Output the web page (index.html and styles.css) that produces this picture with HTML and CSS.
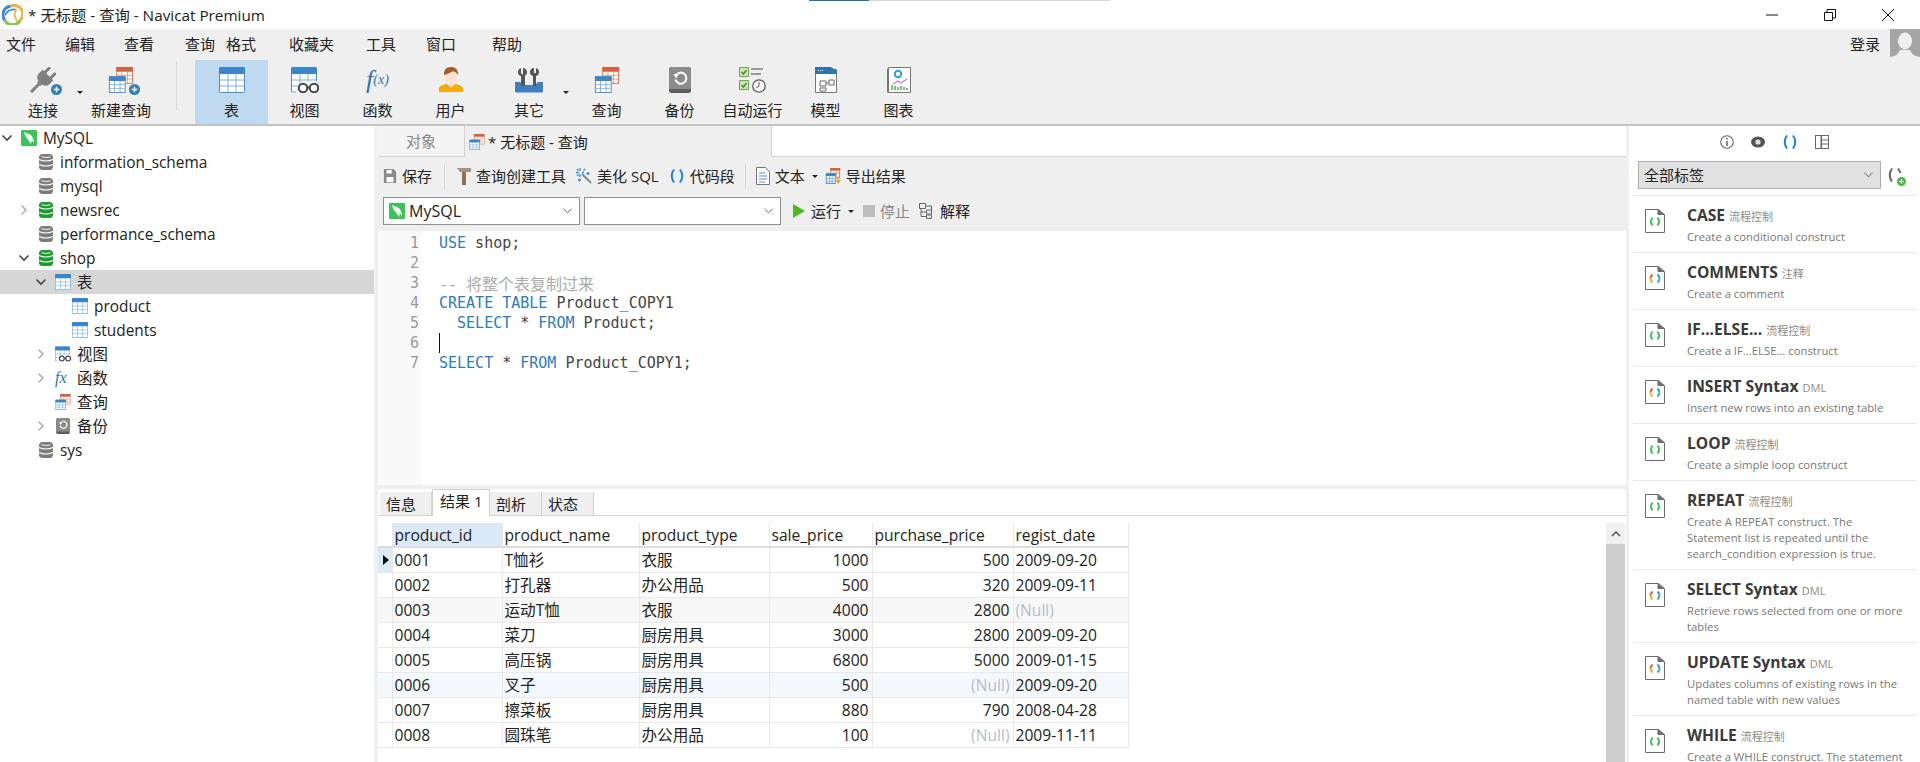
FILE: index.html
```html
<!DOCTYPE html>
<html lang="zh">
<head>
<meta charset="utf-8">
<title>Navicat Premium</title>
<link rel="stylesheet" href="styles.css">
</head>
<body>
<svg class="defs" aria-hidden="true">
  <symbol id="table" viewBox="0 0 26 26"><rect x=".5" y=".5" width="25" height="25" rx="1" fill="#fff" stroke="#4a8cc7"/><path d="M0 7V1.500Q0 0 1.500 0h23Q26 0 26 1.500V7z" fill="#3d85c6"/><path d="M9 7v18M17 7v18M1 13h24M1 19h24" stroke="#7fb0dc"/></symbol>
  <symbol id="view" viewBox="0 0 28 26"><path d="M.5 25V1.500q0-1 1-1h23q1 0 1 1V14" fill="#fff" stroke="#4a8cc7"/><path d="M0 7V1.500Q0 0 1.500 0h23Q26 0 26 1.500V7z" fill="#3d85c6"/><path d="M9 7v11M17 7v7M1 13h24M1 19h6M.5 25H5" stroke="#7fb0dc" fill="none"/><circle cx="12" cy="21" r="4.200" fill="#fff" stroke="#444" stroke-width="2"/><circle cx="23" cy="21" r="4.200" fill="#fff" stroke="#444" stroke-width="2"/><path d="M16 20.500h3" stroke="#444" stroke-width="2"/></symbol>
  <symbol id="user" viewBox="0 0 26 28"><path d="M0 27v-4q1-3 8-5h10q7 2 8 5v4z" fill="#f1ad0e"/><path d="M9 15h8v4l-4 3-4-3z" fill="#fbe3cf"/><ellipse cx="13" cy="9.500" rx="7" ry="8.500" fill="#fbe3cf"/><path d="M5.500 9Q5 0 13 0t7.500 9Q19 5 15 4.500 10 7 5.500 9" fill="#a65a2c"/></symbol>
  <symbol id="tools" viewBox="0 0 28 26"><path d="M0 15h5l3 3h12l3-3h5v9q0 1.500-1.500 1.500h-25Q0 25.500 0 24z" fill="#3f7fbf"/><path d="M6 1v5l2 2V1h1v0q3 1 3 5-1 2-2 3v10H6V9Q3 8 3 5q0-3 3-4zM18 1h1v5h2V1h0q3 1 3 4 0 3-3 4v10h-3V9q-3-1-3-4t3-4z" fill="#555"/></symbol>
  <symbol id="query" viewBox="0 0 26 28"><rect x="8.500" y=".5" width="17" height="17" fill="#fff" stroke="#d4694a"/><path d="M8 5V1q0-1 1-1h16q1 0 1 1v4z" fill="#d4613e"/><path d="M14 5v12M20 5v12M9 9h16M9 13h16" stroke="#e39a84"/><rect x=".5" y="10.500" width="17" height="17" fill="#fff" stroke="#4a8cc7"/><path d="M0 15v-4q0-1 1-1h16q1 0 1 1v4z" fill="#3d85c6"/><path d="M6 15v12M12 15v12M1 19h16M1 23h16" stroke="#7fb0dc"/></symbol>
  <symbol id="backup" viewBox="0 0 22 26"><rect width="22" height="26" rx="2.500" fill="#5f5f5f"/><path d="M0 2.500Q0 0 2.500 0h17Q22 0 22 2.500V22H0z" fill="#8c8c8c"/><path d="M7 8.500a5.500 5.500 0 1 1-.5 4" fill="none" stroke="#fff" stroke-width="2"/><path d="M4.500 7l5 .5-2.500 4z" fill="#fff"/></symbol>
  <symbol id="autorun" viewBox="0 0 28 26"><path d="M.5.500h9v9h-9zM.5 13.500h9v9h-9z" fill="#cfe3bb" stroke="#6aa84f"/><path d="M2.500 5l2 2 3-4M2.500 18l2 2 3-4" fill="none" stroke="#4d8b31" stroke-width="1.500"/><path d="M12 2h12M12 7h10" stroke="#9b9b9b" stroke-width="1.800"/><circle cx="20" cy="19" r="6.200" fill="#fff" stroke="#555" stroke-width="1.300"/><path d="M20 15v4l-3 2" fill="none" stroke="#a33"/></symbol>
  <symbol id="model" viewBox="0 0 22 26"><path d="M.5 2.500h21v23H.5z" fill="#fff" stroke="#777"/><path d="M0 7V0h16l6 4v3z" fill="#2f74ad"/><path d="M5 14h6v5H5zM14 13h5v5h-5zM5 21h6v3H5z" fill="none" stroke="#666"/><path d="M11 16h3" stroke="#666"/><path d="M3 3.500h5" stroke="#fff" stroke-dasharray="1 1"/></symbol>
  <symbol id="chart" viewBox="0 0 24 26"><path d="M1.500.5h22v25h-22z" fill="#fff" stroke="#777"/><path d="M.5 1.500v24" stroke="#777"/><circle cx="11" cy="7" r="3.200" fill="none" stroke="#2e9fd0" stroke-width="2"/><path d="M6 17l5-3 3 2 6-4" fill="none" stroke="#bb7fd2" stroke-width="1.200"/><path d="M5 23v-5M8 23v-4M11 23v-3M14 23v-4M17 23v-3M20 23v-2" stroke="#4caf50" stroke-width="1.500"/></symbol>
  <symbol id="plug" viewBox="0 0 26 26"><g transform="rotate(45 13 13)" fill="#808080"><rect x="7.500" y="-1" width="3" height="8" rx="1"/><rect x="15.500" y="-1" width="3" height="8" rx="1"/><path d="M5.500 6h15v5q0 5-5 6v2h-5v-2q-5-1-5-6z"/><rect x="11.500" y="18" width="3" height="12"/></g></symbol>
  <symbol id="plus" viewBox="0 0 12 12"><circle cx="6" cy="6" r="6" fill="#2f7fb9"/><path d="M3 6h6M6 3v6" stroke="#fff" stroke-width="1.500"/></symbol>
  <symbol id="db" viewBox="0 0 14 16"><rect width="14" height="16" rx="3.500" fill="currentColor"/><path d="M0 5.500Q7 8.500 14 5.500M0 10.500Q7 13.500 14 10.500" fill="none" stroke="#fff" stroke-width="1.100"/><path d="M2.500 2.800Q7 4.300 11.500 2.800" fill="none" stroke="#fff" stroke-width=".9"/></symbol>
  <symbol id="mysql" viewBox="0 0 16 16"><rect width="16" height="16" rx="1" fill="#3bc45a"/><path d="M3 2l6 2.500q3.500 2 4 8.500l-2-2.500q-1 2-1 3.500Q8 11 6.500 9 4 6.500 3 2z" fill="#fff"/></symbol>
  <symbol id="down" viewBox="0 0 14 14"><path d="M2.500 4.500L7 9l4.500-4.500" fill="none" stroke="currentColor" stroke-width="1.600"/></symbol>
  <symbol id="right" viewBox="0 0 14 14"><path d="M4.500 2.500L9 7l-4.500 4.500" fill="none" stroke="currentColor" stroke-width="1.600"/></symbol>
  <symbol id="smalldown" viewBox="0 0 10 6"><path d="M.5.500L5 5 9.500.5" fill="none" stroke="#555"/></symbol>
  <symbol id="snip-g" viewBox="0 0 20 24"><path d="M.5.500h13l6 5v18H.5z" fill="#fff" stroke="#6b6b6b"/><path d="M13 .5v5h6" fill="#6b6b6b" stroke="#6b6b6b"/><path d="M7.500 8.500Q4.500 12.500 7.500 16.500M12.500 8.500Q15.500 12.500 12.500 16.500" fill="none" stroke="#44c15b" stroke-width="2"/></symbol>
  <symbol id="snip-c" viewBox="0 0 20 24"><path d="M.5.500h13l6 5v18H.5z" fill="#fff" stroke="#6b6b6b"/><path d="M13 .5v5h6" fill="#6b6b6b" stroke="#6b6b6b"/><path d="M7.500 8.500Q5.500 10.500 5.500 12.500" fill="none" stroke="#e2603a" stroke-width="2"/><path d="M5.500 12.500Q5.500 14.500 7.500 16.500" fill="none" stroke="#efb02c" stroke-width="2"/><path d="M12.500 8.500Q14.500 10.500 14.500 12.500" fill="none" stroke="#2f9ee0" stroke-width="2"/><path d="M14.500 12.500Q14.500 14.500 12.500 16.500" fill="none" stroke="#3bb4a0" stroke-width="2"/></symbol>
  <symbol id="paren" viewBox="0 0 16 16"><path d="M5 1.500Q.5 8 5 14.500M11 1.500Q15.500 8 11 14.500" fill="none" stroke="#2a7de1" stroke-width="2"/></symbol>
  <symbol id="paren-grey" viewBox="0 0 16 16"><path d="M5 1.500Q.5 8 5 14.500" fill="none" stroke="#666" stroke-width="2"/><path d="M11 1.500Q13 4 13.500 6" fill="none" stroke="#666" stroke-width="2"/></symbol>
  <symbol id="save" viewBox="0 0 14 16"><path d="M0 0h11l3 3v13H0z" fill="#8a8a8a"/><path d="M3 1h6v4H3zM3 9h8v6H3z" fill="#fff"/></symbol>
  <symbol id="hammer" viewBox="0 0 14 18"><path d="M0 1h14v4H9v13H5V5H3z" fill="#a2917d"/><path d="M5 5h4v13H5z" fill="#8b7355"/></symbol>
  <symbol id="wand" viewBox="0 0 16 16"><path d="M6 6l9 9" stroke="#888" stroke-width="2"/><path d="M4 0v3M4 6v3M0 4.500h3M6 4.500h2M9 1L7.500 2.500M1 1l1.500 1.500M1 8l1.500-1.500M12 4v3M10.500 5.500h3M2 12h3M3.500 10.500v3" stroke="#2a8fd8" stroke-width="1.300"/></symbol>
  <symbol id="doc" viewBox="0 0 14 18"><path d="M.5.500h9l4 4v13H.5z" fill="#fff" stroke="#777"/><path d="M3 6h6M3 9h8M3 12h8M3 15h6" stroke="#5a8dbb"/></symbol>
  <symbol id="export" viewBox="0 0 16 18"><rect x="5.500" y=".5" width="10" height="10" fill="#fff" stroke="#d4694a"/><path d="M5 3V0h11v3z" fill="#d4613e"/><path d="M9 3v7M12 3v7M6 6h9" stroke="#e39a84"/><rect x=".5" y="6.500" width="10" height="11" fill="#fff" stroke="#4a8cc7"/><path d="M0 9V6h11v3z" fill="#3d85c6"/><path d="M4 9v8M7 9v8M1 12h9M1 15h9" stroke="#7fb0dc"/><path d="M10 10q4 0 4 4v1M11.500 13.500l2.500 3 2-3" fill="none" stroke="#e79b2b" stroke-width="1.500"/></symbol>
  <symbol id="play" viewBox="0 0 14 18"><path d="M1 2l12 7-12 7z" fill="#4eb81e"/></symbol>
  <symbol id="explain" viewBox="0 0 16 16"><path d="M.5.500h6v5h-6zM2 5.500v8h5M2 9h5M7.500 7h5v4h-5zM7.500 12h5v3.500h-5zM6.500 3h6v4" fill="none" stroke="#666"/></symbol>
  <symbol id="info" viewBox="0 0 14 14"><circle cx="7" cy="7" r="6.300" fill="none" stroke="#666" stroke-width="1.100"/><path d="M7 6v5M7 3v1.500" stroke="#555" stroke-width="1.400"/></symbol>
  <symbol id="eye" viewBox="0 0 14 14"><ellipse cx="7" cy="7" rx="7" ry="5.500" fill="#555"/><circle cx="7" cy="7" r="2.600" fill="#ddd"/></symbol>
  <symbol id="panes" viewBox="0 0 14 14"><path d="M0 0h14v14H0z" fill="#666"/><path d="M1 1h4.500v12H1zM7 1h6v3.500H7zM7 5.500h6v3H7zM7 9.500h6V13H7z" fill="#fff"/></symbol>
  <symbol id="logo" viewBox="0 0 22 22"><path d="M3 17A9 9 0 0 0 19 17" fill="none" stroke="#8bc34a" stroke-width="3.200"/><path d="M3 17A9 9 0 0 1 9 2.300" fill="none" stroke="#3a88d8" stroke-width="3.200"/><path d="M9 2.300A9 9 0 0 1 19 17" fill="none" stroke="#f2b13e" stroke-width="3.200"/><path d="M3 12Q7 4 15 6" fill="none" stroke="#3a88d8" stroke-width="1.800"/><path d="M15 6q-4 5 1 12" fill="none" stroke="#f2b13e" stroke-width="1.800"/></symbol>
  <symbol id="avatar" viewBox="0 0 30 31"><ellipse cx="15" cy="12" rx="7" ry="8.500" fill="#efefef"/><path d="M0 31v-3q8-1 10-7h10q2 6 10 7v3z" fill="#efefef"/></symbol>
</svg>

<header class="titlebar">
  <svg class="logo"><use href="#logo"/></svg>
  <span class="title">* 无标题 - 查询 - Navicat Premium</span>
  <div class="winctl">
    <svg class="win" viewBox="0 0 14 14"><path d="M1 7h12" stroke="#111"/></svg>
    <svg class="win" viewBox="0 0 14 14"><path d="M1.500 4.500h8v8h-8zM4 4.500V1.500h8.500V10H9.500" fill="none" stroke="#111"/></svg>
    <svg class="win" viewBox="0 0 14 14"><path d="M1 1l12 12M13 1L1 13" stroke="#111"/></svg>
  </div>
  <div class="progress"><i></i></div>
</header>

<nav class="menubar">
  <div class="menus">
    <span>文件</span><span>编辑</span><span>查看</span><span>查询</span><span>格式</span><span>收藏夹</span><span>工具</span><span>窗口</span><span>帮助</span>
  </div>
  <div class="login"><span>登录</span><svg class="avatar"><use href="#avatar"/></svg></div>
</nav>

<div class="toolbar">
  <div class="tb tb-connect"><span class="tb-ic"><svg class="i26"><use href="#plug"/></svg><svg class="badge"><use href="#plus"/></svg></span><span>连接</span><i class="caret caret-out"></i></div>
  <div class="tb tb-new"><span class="tb-ic"><svg class="i26"><use href="#query"/></svg><svg class="badge"><use href="#plus"/></svg></span><span>新建查询</span></div>
  <div class="tb-sep"></div>
  <div class="tb active"><span class="tb-ic"><svg class="i26"><use href="#table"/></svg></span><span>表</span></div>
  <div class="tb"><span class="tb-ic"><svg class="i28"><use href="#view"/></svg></span><span>视图</span></div>
  <div class="tb"><span class="tb-ic fx"><span>f</span><small>(x)</small></span><span>函数</span></div>
  <div class="tb"><span class="tb-ic"><svg class="i26"><use href="#user"/></svg></span><span>用户</span></div>
  <div class="tb tb-other"><span class="tb-ic"><svg class="i28"><use href="#tools"/></svg></span><span>其它</span><i class="caret caret-out"></i></div>
  <div class="tb"><span class="tb-ic"><svg class="i26"><use href="#query"/></svg></span><span>查询</span></div>
  <div class="tb"><span class="tb-ic"><svg class="i26"><use href="#backup"/></svg></span><span>备份</span></div>
  <div class="tb"><span class="tb-ic"><svg class="i28"><use href="#autorun"/></svg></span><span>自动运行</span></div>
  <div class="tb"><span class="tb-ic"><svg class="i26"><use href="#model"/></svg></span><span>模型</span></div>
  <div class="tb"><span class="tb-ic"><svg class="i26"><use href="#chart"/></svg></span><span>图表</span></div>
</div>

<main class="workspace">
  <aside class="tree">
    <div class="row l0"><svg class="chev dark"><use href="#down"/></svg><svg class="ti"><use href="#mysql"/></svg><span>MySQL</span></div>
    <div class="row l0 nochev"><svg class="ti grey"><use href="#db"/></svg><span>information_schema</span></div>
    <div class="row l0 nochev"><svg class="ti grey"><use href="#db"/></svg><span>mysql</span></div>
    <div class="row l1"><svg class="chev"><use href="#right"/></svg><svg class="ti green"><use href="#db"/></svg><span>newsrec</span></div>
    <div class="row l0 nochev"><svg class="ti grey"><use href="#db"/></svg><span>performance_schema</span></div>
    <div class="row l1"><svg class="chev dark"><use href="#down"/></svg><svg class="ti green"><use href="#db"/></svg><span>shop</span></div>
    <div class="row l2 selected"><svg class="chev dark"><use href="#down"/></svg><svg class="ti"><use href="#table"/></svg><span>表</span></div>
    <div class="row l3"><svg class="ti"><use href="#table"/></svg><span>product</span></div>
    <div class="row l3"><svg class="ti"><use href="#table"/></svg><span>students</span></div>
    <div class="row l2"><svg class="chev"><use href="#right"/></svg><svg class="ti"><use href="#view"/></svg><span>视图</span></div>
    <div class="row l2"><svg class="chev"><use href="#right"/></svg><i class="ti fxs">fx</i><span>函数</span></div>
    <div class="row l2 nochev"><svg class="ti"><use href="#query"/></svg><span>查询</span></div>
    <div class="row l2"><svg class="chev"><use href="#right"/></svg><svg class="ti"><use href="#backup"/></svg><span>备份</span></div>
    <div class="row l0 nochev"><svg class="ti grey"><use href="#db"/></svg><span>sys</span></div>
  </aside>

  <section class="center">
    <div class="tabs">
      <div class="tab">对象</div>
      <div class="tab tab-on"><svg class="i16"><use href="#query"/></svg><span>* 无标题 - 查询</span></div>
      <div class="tabfill"></div>
    </div>
    <div class="tools">
      <span class="ti-item"><svg class="i14"><use href="#save"/></svg>保存</span>
      <i class="vsep"></i>
      <span class="ti-item"><svg class="i14 ham"><use href="#hammer"/></svg>查询创建工具</span>
      <span class="ti-item"><svg class="i16"><use href="#wand"/></svg>美化 SQL</span>
      <span class="ti-item"><svg class="i16"><use href="#paren"/></svg>代码段</span>
      <i class="vsep vsep-tight"></i>
      <span class="ti-item"><svg class="i14 ham"><use href="#doc"/></svg>文本<i class="caret caret-in"></i></span>
      <span class="ti-item export"><svg class="i16"><use href="#export"/></svg>导出结果</span>
    </div>
    <div class="conn">
      <div class="sel"><svg class="i16"><use href="#mysql"/></svg><span>MySQL</span><svg class="sel-ch"><use href="#smalldown"/></svg></div>
      <div class="sel"><span></span><svg class="sel-ch"><use href="#smalldown"/></svg></div>
      <span class="ti-item run"><svg class="i14 ham"><use href="#play"/></svg>运行<i class="caret caret-in"></i></span>
      <span class="ti-item off"><i class="stop"></i>停止</span>
      <span class="ti-item"><svg class="i16"><use href="#explain"/></svg>解释</span>
    </div>
    <div class="editor">
      <div class="gutter"><div>1</div><div>2</div><div>3</div><div>4</div><div>5</div><div>6</div><div>7</div></div>
      <div class="code">
        <div><b>USE</b> shop;</div>
        <div>&nbsp;</div>
        <div class="cm">-- <span>将整个表复制过来</span></div>
        <div><b>CREATE</b> <b>TABLE</b> Product_COPY1</div>
        <div>&nbsp;&nbsp;<b>SELECT</b> * <b>FROM</b> Product;</div>
        <div class="cursor">&nbsp;</div>
        <div><b>SELECT</b> * <b>FROM</b> Product_COPY1;</div>
      </div>
    </div>
    <div class="restabs">
      <div class="rt">信息</div>
      <div class="rt rt-on">结果 1</div>
      <div class="rt">剖析</div>
      <div class="rt">状态</div>
    </div>
    <div class="resbody">
      <div class="grid-wrap">
        <table class="grid">
          <colgroup><col class="c0"><col class="c1"><col class="c2"><col class="c3"><col class="c4"><col class="c5"><col class="c6"></colgroup>
          <thead><tr><th class="ind"></th><th class="hot">product_id</th><th>product_name</th><th>product_type</th><th>sale_price</th><th>purchase_price</th><th>regist_date</th></tr></thead>
          <tbody>
            <tr><td class="ind ind-on"><i></i></td><td>0001</td><td>T恤衫</td><td>衣服</td><td class="n">1000</td><td class="n">500</td><td>2009-09-20</td></tr>
            <tr><td class="ind"></td><td>0002</td><td>打孔器</td><td>办公用品</td><td class="n">500</td><td class="n">320</td><td>2009-09-11</td></tr>
            <tr class="alt"><td class="ind"></td><td>0003</td><td>运动T恤</td><td>衣服</td><td class="n">4000</td><td class="n">2800</td><td class="null">(Null)</td></tr>
            <tr><td class="ind"></td><td>0004</td><td>菜刀</td><td>厨房用具</td><td class="n">3000</td><td class="n">2800</td><td>2009-09-20</td></tr>
            <tr><td class="ind"></td><td>0005</td><td>高压锅</td><td>厨房用具</td><td class="n">6800</td><td class="n">5000</td><td>2009-01-15</td></tr>
            <tr class="hl"><td class="ind"></td><td>0006</td><td>叉子</td><td>厨房用具</td><td class="n">500</td><td class="n null">(Null)</td><td>2009-09-20</td></tr>
            <tr><td class="ind"></td><td>0007</td><td>擦菜板</td><td>厨房用具</td><td class="n">880</td><td class="n">790</td><td>2008-04-28</td></tr>
            <tr><td class="ind"></td><td>0008</td><td>圆珠笔</td><td>办公用品</td><td class="n">100</td><td class="n null">(Null)</td><td>2009-11-11</td></tr>
          </tbody>
        </table>
      </div>
      <div class="vscroll"><div class="arrow"><svg viewBox="0 0 10 6"><path d="M1 5l4-4 4 4" fill="none" stroke="#555" stroke-width="1.500"/></svg></div><div class="thumb"></div></div>
    </div>
  </section>

  <aside class="side">
    <div class="side-ic">
      <svg class="i14"><use href="#info"/></svg>
      <svg class="i14"><use href="#eye"/></svg>
      <svg class="i16"><use href="#paren"/></svg>
      <svg class="i14"><use href="#panes"/></svg>
    </div>
    <div class="side-sel">
      <div class="tagsel"><span>全部标签</span><svg class="sel-ch"><use href="#smalldown"/></svg></div>
      <span class="addsnip"><svg class="i16"><use href="#paren-grey"/></svg><svg class="addb" viewBox="0 0 10 10"><circle cx="5" cy="5" r="5" fill="#4cb648"/><path d="M2.500 5h5M5 2.500v5" stroke="#fff" stroke-width="1.300"/></svg></span>
    </div>
    <div class="snips">
      <article class="snip"><svg class="snip-ic"><use href="#snip-g"/></svg><div><h4>CASE <small>流程控制</small></h4><p>Create a conditional construct</p></div></article>
      <article class="snip"><svg class="snip-ic"><use href="#snip-c"/></svg><div><h4>COMMENTS <small>注释</small></h4><p>Create a comment</p></div></article>
      <article class="snip"><svg class="snip-ic"><use href="#snip-g"/></svg><div><h4>IF...ELSE... <small>流程控制</small></h4><p>Create a IF...ELSE... construct</p></div></article>
      <article class="snip"><svg class="snip-ic"><use href="#snip-c"/></svg><div><h4>INSERT Syntax <small>DML</small></h4><p>Insert new rows into an existing table</p></div></article>
      <article class="snip"><svg class="snip-ic"><use href="#snip-g"/></svg><div><h4>LOOP <small>流程控制</small></h4><p>Create a simple loop construct</p></div></article>
      <article class="snip"><svg class="snip-ic"><use href="#snip-g"/></svg><div><h4>REPEAT <small>流程控制</small></h4><p>Create A REPEAT construct. The Statement list is repeated until the search_condition expression is true.</p></div></article>
      <article class="snip"><svg class="snip-ic"><use href="#snip-c"/></svg><div><h4>SELECT Syntax <small>DML</small></h4><p>Retrieve rows selected from one or more tables</p></div></article>
      <article class="snip"><svg class="snip-ic"><use href="#snip-c"/></svg><div><h4>UPDATE Syntax <small>DML</small></h4><p>Updates columns of existing rows in the named table with new values</p></div></article>
      <article class="snip"><svg class="snip-ic"><use href="#snip-g"/></svg><div><h4>WHILE <small>流程控制</small></h4><p>Create a WHILE construct. The statement list within a WHILE statement is repeated</p></div></article>
    </div>
  </aside>
</main>
</body>
</html>
```

FILE: styles.css
```css
* { box-sizing: border-box; }
html, body { margin: 0; height: 762px; overflow: hidden; }
body {
  display: flex; flex-direction: column; width: 1920px;
  font: 15px/20px "Open Sans", "Noto Sans CJK SC", sans-serif;
  color: #222; background: #fff;
}
svg { display: block; flex: none; overflow: visible; }
.defs { position: absolute; width: 0; height: 0; }
.i14 { width: 14px; height: 14px; }
.i16 { width: 16px; height: 16px; }
.i26 { width: 26px; height: 26px; }
.i28 { width: 28px; height: 26px; }
.ham { width: 14px; height: 18px; }

/* title bar */
.titlebar { position: relative; flex: none; height: 29px; display: flex; align-items: center; padding-left: 2px; }
.logo { width: 21px; height: 21px; }
.title { margin-left: 5px; color: #222; font-size: 15.3px; }
.winctl { margin-left: auto; display: flex; gap: 44px; padding-right: 25px; }
.win { width: 14px; height: 14px; }
.progress { position: absolute; left: 809px; top: 0; width: 301px; height: 1px; background: #d8d8d8; }
.progress i { display: block; width: 60px; height: 1px; background: #1e6fb5; }

/* menu */
.menubar { flex: none; height: 31px; background: #efefef; display: flex; justify-content: space-between; align-items: flex-start; }
.menus { display: grid; grid-template-columns: 59px 59px 61px 41px 63px 77px 60px 66px auto; padding: 5px 0 0 6px; }
.login { display: flex; gap: 10px; align-items: flex-start; }
.login span { margin-top: 5px; }
.avatar { width: 30px; height: 31px; background: #a5a5a5; }

/* toolbar */
.toolbar { flex: none; height: 66px; background: #efefef; border-bottom: 2px solid #c4c4c4; display: flex; padding-left: 6px; }
.tb { position: relative; width: 73px; height: 64px; display: flex; flex-direction: column; align-items: center; padding-top: 6px; }
.tb-ic { position: relative; display: flex; justify-content: center; align-items: center; height: 28px; margin-bottom: 6px; }
.tb.active { background: #bfd9f0; }
.tb-connect { width: 74px; }
.tb-new { width: 82px; }
.tb-sep { width: 1px; height: 50px; margin: 1px 18px 0 14px; background: #d9d9d9; }
.tb-other { width: 74px; margin: 0 4px 0 5px; }
.badge { position: absolute; right: -6px; bottom: -1px; width: 11px; height: 11px; }
.caret { display: block; border: 3px solid transparent; border-top: 3px solid #222; border-bottom: 0; }
.caret-out { position: absolute; right: -3px; top: 31px; }
.fx { font: italic 26px/28px "Liberation Serif", serif; color: #2f74ad; }
.fx small { font-size: 14px; }

/* workspace */
.workspace { flex: 1; min-height: 0; display: flex; }
.tree { flex: none; width: 374px; margin-right: 4px; box-shadow: 4px 0 0 #f0f0f0; font-size: 15.4px; }
.row { height: 24px; display: flex; align-items: center; color: #222; }
.row span { margin-top: 2px; }
.l1 { padding-left: 17px; }
.l2 { padding-left: 34px; }
.l3 { padding-left: 72px; }
.l0.nochev { padding-left: 38px; }
.l2.nochev { padding-left: 55px; }
.chev { width: 14px; height: 14px; margin-right: 7px; color: #b0b0b0; }
.chev.dark { color: #444; }
.ti { width: 16px; height: 16px; margin-right: 6px; }
.grey { color: #7d7d7d; }
.green { color: #1c9c2c; }
.fxs { font: italic 16px/16px "Liberation Serif", serif; color: #2f74ad; }
.selected { background: #d6d6d6; }

/* center */
.center { flex: none; width: 1249px; display: flex; flex-direction: column; min-height: 0; }
.tabs { flex: none; height: 31px; display: flex; background: #efefef; }
.tab { width: 87px; display: flex; align-items: center; justify-content: center; gap: 3px; color: #888; background: #f4f4f4; border: 1px solid #d2d2d2; border-width: 0 1px 1px 0; }
.tab-on { width: 306px; justify-content: flex-start; padding-left: 4px; background: #efefef; color: #222; border-width: 0; }
.tabfill { flex: 1; background: #fff; border-bottom: 1px solid #d2d2d2; border-left: 1px solid #d2d2d2; }
.tools, .conn { flex: none; display: flex; align-items: center; background: #efefef; padding-left: 5px; }
.tools { height: 38px; gap: 10px; }
.conn { height: 36px; padding-bottom: 6px; padding-top: 2px; gap: 4px; }
.ti-item { display: flex; align-items: center; gap: 5px; white-space: nowrap; }
.vsep { width: 1px; height: 25px; background: #d9d9d9; margin: 0 2px; }
.vsep-tight { margin: 0; }
.export { margin-left: -3px; }
.sel { width: 197px; height: 28px; display: flex; align-items: center; gap: 4px; padding-left: 5px; background: #fff; border: 1px solid #8f8f8f; font-size: 16px; }
.sel-ch { width: 9px; height: 6px; margin-left: auto; margin-right: 7px; }
.run { margin-left: 7px; }
.off { color: #888; }
.conn .ti-item + .ti-item { margin-left: 5px; }
.caret-in { margin-left: 2px; }
.stop { width: 12px; height: 12px; background: #bdbdbd; }

.editor { flex: none; height: 254px; display: flex; background: #fff; font: 15px/20px "DejaVu Sans Mono", monospace; color: #444; padding-top: 2px; }
.gutter { width: 43px; margin-top: -2px; padding: 2px 2px 0 0; text-align: right; background: #f9f9f9; color: #999; margin-right: 18px; }
.code { flex: 1; position: relative; }
.code b { font-weight: 400; color: #2c7bbd; }
.cm { color: #aaa; height: 20px; }
.cm span { font: 16px/20px "Noto Sans CJK SC", sans-serif; }
.cursor { box-shadow: inset 1px 0 0 #111; width: 10px; }

.restabs { flex: none; height: 31px; display: flex; align-items: flex-end; padding-left: 2px; background: #fff; border-top: 4px solid #efefef; border-bottom: 1px solid #d2d2d2; }
.rt { width: 52px; height: 24px; margin-bottom: -1px; padding-left: 6px; background: #efefef; border: 1px solid #d2d2d2; border-width: 0 1px 1px 0; line-height: 24px; }
.rt-on { width: 58px; height: 27px; padding-left: 7px; background: #fff; border-width: 1px 1px 0 1px; line-height: 22px; }
.resbody { flex: 1; min-height: 0; display: flex; padding-top: 7px; overflow: hidden; }
.grid-wrap { flex: 1; }
.grid { border-collapse: collapse; table-layout: fixed; width: 750px; line-height: 20px; font-size: 15.6px; }
.c0 { width: 14px; } .c1 { width: 110px; } .c2 { width: 137px; } .c3 { width: 130px; } .c4 { width: 103px; } .c5 { width: 141px; } .c6 { width: 115px; }
.grid th, .grid td { height: 25px; padding: 0 3px 0 2px; font-weight: 400; text-align: left; white-space: nowrap; border: 1px solid #e8e8e8; border-width: 0 1px 1px 0; overflow: hidden; }
.grid th { height: 24px; border-bottom: 2px solid #dcdcdc; }
.grid .ind { padding: 0; position: relative; }
.grid .hot { background: #d9e9f7; }
.grid .ind-on { background: #dceaf7; }
.ind-on i { display: block; margin-left: 5px; width: 0; height: 0; border: 5px solid transparent; border-left: 6px solid #111; border-right: 0; }
.grid .n { text-align: right; }
.grid .null { color: #b6bdca; }
.alt td { background: #f7f7f7; }
.hl td { background: #f3f8fc; }
.vscroll { flex: none; width: 19px; margin-right: 2px; display: flex; flex-direction: column; }
.arrow { height: 21px; background: #f0f0f0; display: flex; align-items: center; justify-content: center; }
.arrow svg { width: 10px; height: 6px; }
.thumb { flex: 1; background: #cdcdcd; }

/* side */
.side { flex: 1; min-width: 0; border-left: 3px solid #f0f0f0; margin-left: -1px; padding-left: 4px; overflow: hidden; }
.side-ic { height: 35px; display: flex; align-items: center; justify-content: center; gap: 17px; padding: 0 5px 3px 0; }
.side-sel { display: flex; align-items: center; padding-left: 5px; gap: 6px; }
.tagsel { width: 243px; height: 28px; display: flex; align-items: center; padding-left: 5px; background: #e1e1e1; border: 1px solid #adadad; }
.addsnip { position: relative; }
.addsnip .i16 { width: 16px; height: 18px; }
.addb { position: absolute; right: -3px; bottom: -2px; width: 9px; height: 9px; }
.snips { margin: 6px 4px 0 0; border-top: 1px solid #e8e8e8; }
.snip { display: flex; align-items: flex-start; padding: 8px 0 7px 12px; border-bottom: 1px solid #e8e8e8; gap: 22px; }
.snip-ic { width: 20px; height: 24px; margin-top: 5px; }
.snip h4 { height: 22px; margin: 0 0 3px; font-size: 15.6px; line-height: 22px; font-weight: 700; color: #3a3a3a; white-space: nowrap; }
.snip small { font-size: 11px; line-height: 1; font-weight: 400; color: #8a8a8a; }
.snip p { margin: 0; max-width: 218px; font-size: 11.3px; line-height: 16px; color: #777; }
```
